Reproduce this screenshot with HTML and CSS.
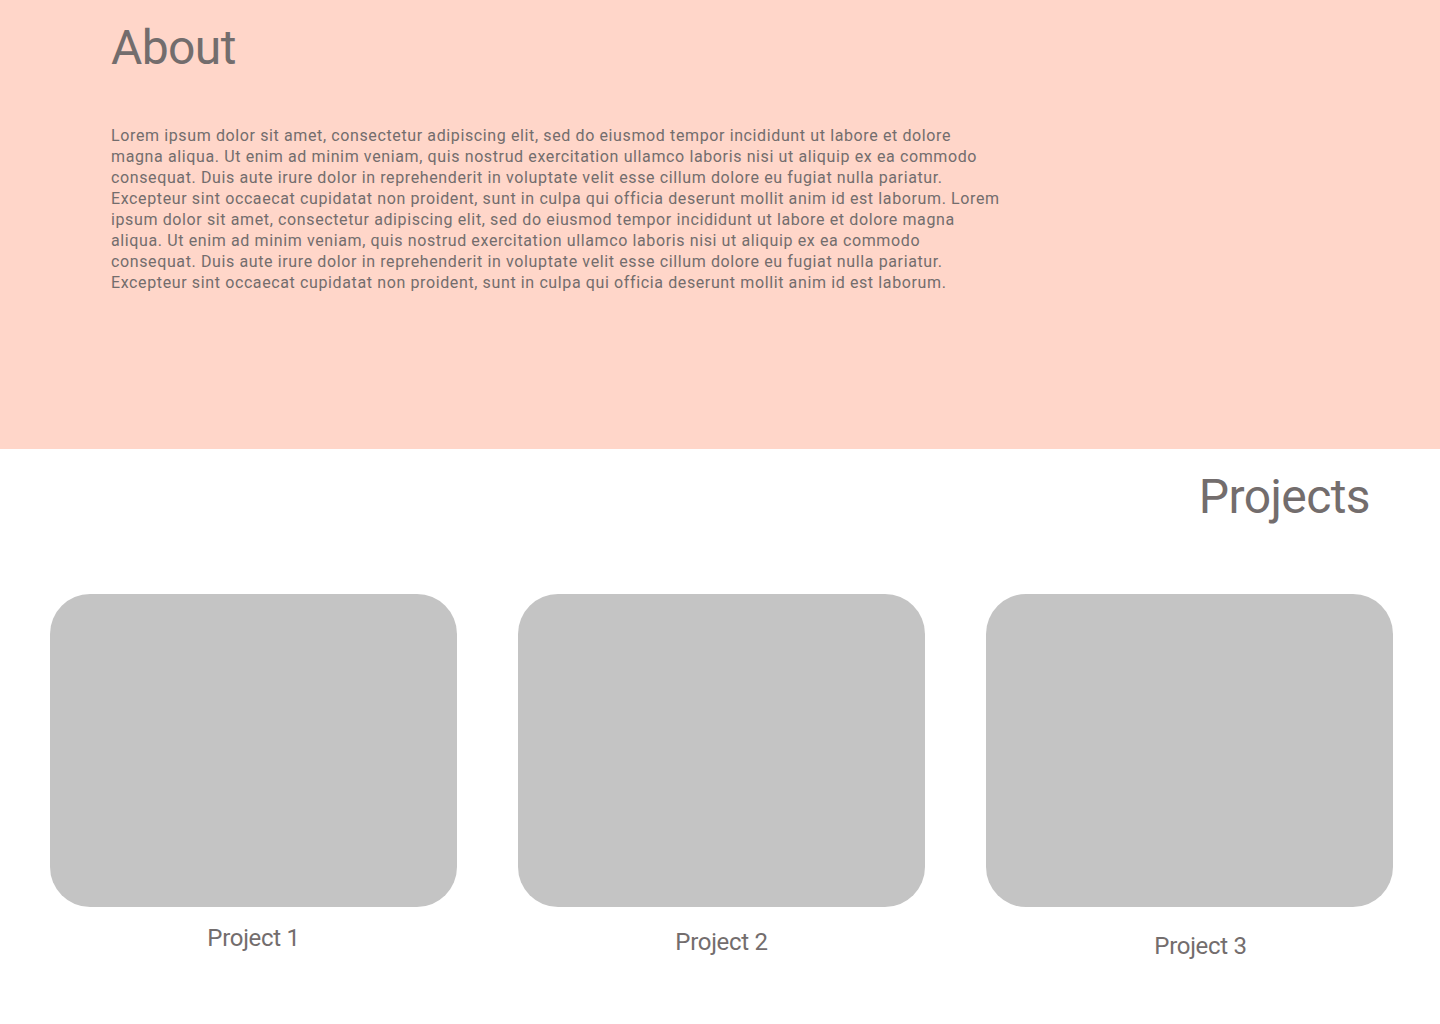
FILE: index.html
```html
<!DOCTYPE html>
<html lang="en">
<head>
<meta charset="UTF-8" />
<meta name="viewport" content="width=device-width, initial-scale=1.0"/>
<title>About &amp; Projects</title>
<link rel="stylesheet" href="styles.css">
</head>
<body>

<section class="about">
    <h1>About</h1>
    <p>Lorem ipsum dolor sit amet, consectetur adipiscing elit, sed do eiusmod tempor incididunt ut labore et dolore magna aliqua. Ut enim ad minim veniam, quis nostrud exercitation ullamco laboris nisi ut aliquip ex ea commodo consequat. Duis aute irure dolor in reprehenderit in voluptate velit esse cillum dolore eu fugiat nulla pariatur. Excepteur sint occaecat cupidatat non proident, sunt in culpa qui officia deserunt mollit anim id est laborum. Lorem ipsum dolor sit amet, consectetur adipiscing elit, sed do eiusmod tempor incididunt ut labore et dolore magna aliqua. Ut enim ad minim veniam, quis nostrud exercitation ullamco laboris nisi ut aliquip ex ea commodo consequat. Duis aute irure dolor in reprehenderit in voluptate velit esse cillum dolore eu fugiat nulla pariatur. Excepteur sint occaecat cupidatat non proident, sunt in culpa qui officia deserunt mollit anim id est laborum.</p>
</section>

<section class="projects">
    <h2>Projects</h2>

    <div class="project-list">
        <div class="project">
            <div class="project-thumb"></div>
            <div class="project-name name-1">Project 1</div>
        </div>
        <div class="project">
            <div class="project-thumb"></div>
            <div class="project-name name-2">Project 2</div>
        </div>
        <div class="project">
            <div class="project-thumb"></div>
            <div class="project-name name-3">Project 3</div>
        </div>
    </div>
</section>

</body>
</html>
```

FILE: styles.css
```css
body {
    font-family: Roboto, "Liberation Sans", sans-serif;
    margin: 0;
    background: #fff;
    color: #736d6d;
}

.about {
    background: #ffd6c9;
    height: 449px;
    box-sizing: border-box;
    padding: 20px 0 0 111px;
}

.about h1 {
    font-size: 48px;
    font-weight: 400;
    line-height: 56px;
    letter-spacing: -0.6px;
    margin: 0;
}

.about p {
    width: 893px;
    margin: 49px 0 0;
    font-size: 16px;
    line-height: 21px;
    letter-spacing: 0.62px;
}

.projects {
    padding: 20px 0 60px;
}

.projects h2 {
    font-size: 48px;
    font-weight: 400;
    line-height: 56px;
    letter-spacing: -0.6px;
    margin: 0;
    padding-right: 70px;
    text-align: right;
}

.project-list {
    display: flex;
    gap: 61px;
    margin-top: 69px;
    padding-left: 50px;
}

.project {
    width: 407px;
}

.project-thumb {
    height: 313px;
    background: #c4c4c4;
    border-radius: 40px;
}

.project-name {
    font-size: 24px;
    line-height: 28px;
    letter-spacing: -0.3px;
    text-align: center;
}

.name-1 { margin-top: 17px; }
.name-2 { margin-top: 21px; }
.name-3 { margin-top: 25px; padding-left: 22px; }
```
